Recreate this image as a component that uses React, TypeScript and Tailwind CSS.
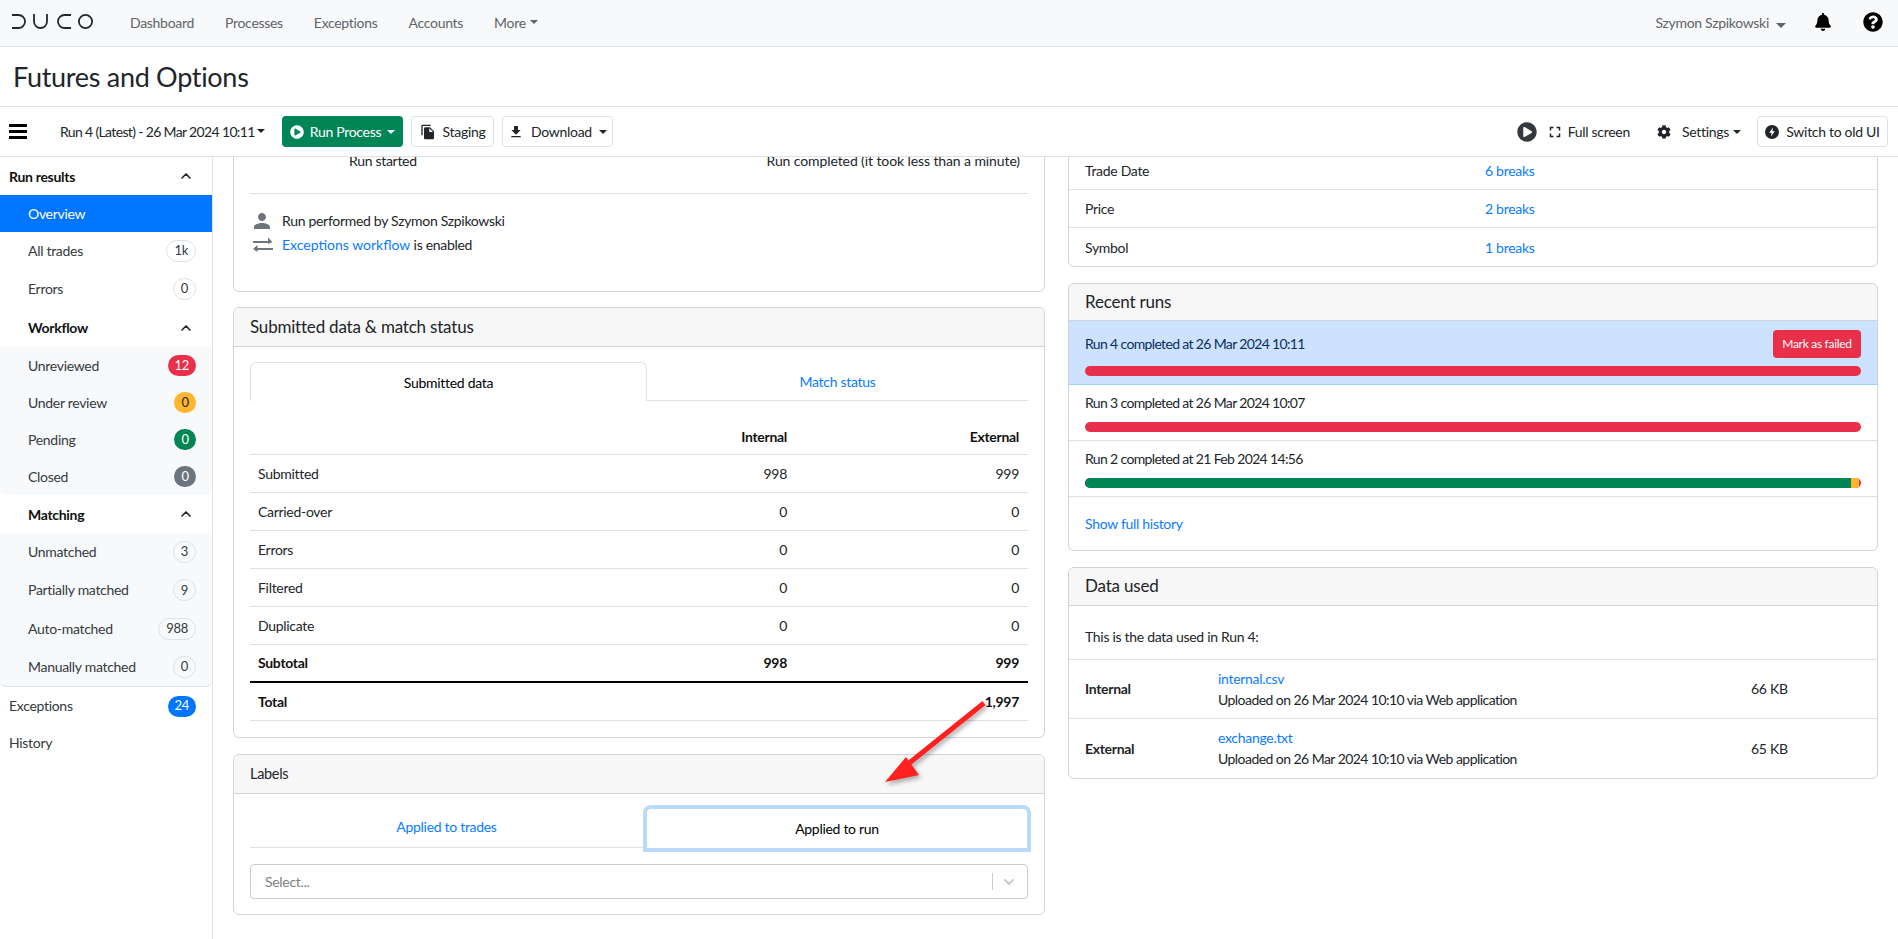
import { ChevronDown, ChevronUp } from 'lucide-react';
import { FaBell, FaCog, FaPlayCircle, FaQuestionCircle } from 'react-icons/fa';
import { MdFileCopy, MdFileDownload, MdFullscreen, MdPerson } from 'react-icons/md';

const Caret = ({ className = 'border-x-[4.5px] border-t-[4.5px] border-t-current' }: { className?: string }) => (
  <span className={`inline-block w-0 h-0 border-x-transparent ${className}`} />
);

const Logo = () => (
  <svg width="82" height="16" viewBox="0 0 82 16" fill="none" stroke="#24292e" strokeWidth="1.8">
    <path d="M0 1h6.5a6.2 6.2 0 0 1 0 13H0" />
    <path d="M22 0v7.5a6.5 6.5 0 0 0 13 0V0" />
    <path d="M59 1h-6.5a6.2 6.2 0 0 0 0 13H59" />
    <circle cx="73.5" cy="7.5" r="6.6" />
  </svg>
);

const SwapIcon = () => (
  <svg width="20" height="16" viewBox="0 0 20 16" className="ml-[3px] mr-[9px] shrink-0" fill="#6c757d">
    <path d="M0 5h15V1.500L19.500 6 15 8V7H0z" />
    <path d="M20 12H4.500V9L0 13l4.500 3v-2H20z" />
  </svg>
);

const Badge = ({ value, color }: { value: string; color?: string }) => (
  <span
    className={`inline-flex items-center justify-center rounded-full px-[7px] text-[13px] min-w-[22px] ${
      color ? `h-[21px] ${color}` : 'border border-[#dee2e6] h-[22px] text-[#343a40]'
    }`}
  >
    {value}
  </span>
);

const SideRow = ({ label, badge, h = 'h-[38px]' }: { label: string; badge?: React.ReactNode; h?: string }) => (
  <div className={`${h} flex items-center justify-between pl-[28px] pr-[16px] text-[#343a40]`}>
    <span className="pb-[1px]">{label}</span>
    {badge}
  </div>
);

const SideHead = ({ label, className }: { label: string; className: string }) => (
  <div className={`${className} flex items-center justify-between pr-[18px] font-bold text-[#111]`}>
    <span>{label}</span>
    <ChevronUp size={16} strokeWidth={2.5} className="text-[#212529]" />
  </div>
);

const Sidebar = () => (
  <aside className="w-[213px] shrink-0 border-r border-[#dee2e6] bg-white">
    <SideHead label="Run results" className="h-[38px] pl-[9px]" />
    <div className="h-[37px] flex items-center pl-[28px] pb-[1px] bg-[#0075ff] text-white">Overview</div>
    <SideRow label="All trades" badge={<Badge value="1k" />} />
    <SideRow label="Errors" badge={<Badge value="0" />} />
    <SideHead label="Workflow" className="h-[39px] pl-[28px]" />
    <div className="bg-[#f8f9fa] rounded-b-md">
      <SideRow h="h-[37px]" label="Unreviewed" badge={<Badge value="12" color="bg-[#e8304a] text-white" />} />
      <SideRow h="h-[37px]" label="Under review" badge={<Badge value="0" color="bg-[#ffb52e] text-[#212529]" />} />
      <SideRow h="h-[37px]" label="Pending" badge={<Badge value="0" color="bg-[#008556] text-white" />} />
      <SideRow h="h-[37px]" label="Closed" badge={<Badge value="0" color="bg-[#6c757d] text-white" />} />
    </div>
    <SideHead label="Matching" className="h-[38px] pl-[28px]" />
    <div className="bg-[#f8f9fa] rounded-b-md border-b border-[#dee2e6]">
      <SideRow h="h-[38.25px]" label="Unmatched" badge={<Badge value="3" />} />
      <SideRow h="h-[38.25px]" label="Partially matched" badge={<Badge value="9" />} />
      <SideRow h="h-[38.25px]" label="Auto-matched" badge={<Badge value="988" />} />
      <SideRow h="h-[38.25px]" label="Manually matched" badge={<Badge value="0" />} />
    </div>
    <div className="h-[38px] flex items-center justify-between pl-[9px] pr-[16px] text-[#343a40]">
      <span className="pb-[1px]">Exceptions</span>
      <Badge value="24" color="bg-[#0075ff] text-white" />
    </div>
    <div className="h-[36px] flex items-center pl-[9px] pb-[1px] text-[#343a40]">History</div>
  </aside>
);

const Card = ({ children, className = '' }: { children: React.ReactNode; className?: string }) => (
  <section className={`border border-[#ced4da] rounded-md bg-white ${className}`}>{children}</section>
);

const CardHead = ({ title, className = 'text-[17px] tracking-[-0.2px]', h = 'h-[39px]' }: { title: string; className?: string; h?: string }) => (
  <div className={`${h} flex items-center pl-[16px] pb-[1px] bg-[#f7f7f7] border-b border-[#ced4da] rounded-t-md text-[#212529] ${className}`}>
    {title}
  </div>
);

const rows = [
  ['Submitted', '998', '999'],
  ['Carried-over', '0', '0'],
  ['Errors', '0', '0'],
  ['Filtered', '0', '0'],
  ['Duplicate', '0', '0'],
];

const SubmittedCard = () => (
  <Card>
    <CardHead title="Submitted data & match status" />
    <div className="px-[16px] pt-[15px] pb-[16px]">
      <div className="flex h-[39px]">
        <div className="w-[397px] flex items-center justify-center border border-b-0 border-[#dee2e6] rounded-t-md text-black">
          Submitted data
        </div>
        <div className="flex-1 flex items-center justify-center border-b border-[#dee2e6] text-[#0a7cff]">Match status</div>
      </div>
      <div className="h-[54px] flex items-end pb-[7px] font-bold border-b border-[#dee2e6] text-[#111]">
        <span className="flex-1" />
        <span className="w-[100px] pr-[9px] text-right">Internal</span>
        <span className="w-[232px] pr-[9px] text-right">External</span>
      </div>
      {rows.map(([label, a, b]) => (
        <div key={label} className="h-[38px] flex items-center pb-[1px] border-b border-[#dee2e6] text-[#212529]">
          <span className="flex-1 pl-[8px]">{label}</span>
          <span className="w-[100px] pr-[9px] text-right">{a}</span>
          <span className="w-[232px] pr-[9px] text-right">{b}</span>
        </div>
      ))}
      <div className="h-[38px] flex items-center pb-[1px] border-b-2 border-black font-bold text-[#111]">
        <span className="flex-1 pl-[8px]">Subtotal</span>
        <span className="w-[100px] pr-[9px] text-right">998</span>
        <span className="w-[232px] pr-[9px] text-right">999</span>
      </div>
      <div className="h-[38px] flex items-center pb-[1px] border-b border-[#dee2e6] font-bold text-[#111]">
        <span className="flex-1 pl-[8px]">Total</span>
        <span className="pr-[9px] text-right">1,997</span>
      </div>
    </div>
  </Card>
);

const LabelsCard = () => (
  <Card className="mt-[1px]">
    <CardHead title="Labels" className="text-[14.5px]" />
    <div className="px-[16px] pt-[11px] pb-[15px]">
      <div className="flex items-start h-[47px]">
        <div className="w-[393px] shrink-0 h-[43px] flex items-center justify-center border-b border-[#dee2e6] text-[#0a7cff]">Applied to trades</div>
        <div className="w-[388px] shrink-0 h-[47px] flex items-center justify-center border-4 border-[#b9dafa] rounded-t-lg bg-white text-black">
          Applied to run
        </div>
      </div>
      <div className="mt-[12px] h-[35px] flex items-center border border-[#cccccc] rounded pl-[14px] pr-[10px] text-[#808080]">
        <span className="flex-1">Select...</span>
        <span className="h-[17px] border-l border-[#cccccc] mr-[8px]" />
        <ChevronDown size={16} strokeWidth={3} className="text-[#cccccc]" />
      </div>
    </div>
  </Card>
);

const RunBar = ({ children }: { children: React.ReactNode }) => (
  <div className="h-[10px] rounded-full overflow-hidden flex bg-[#e8304a]">{children}</div>
);

const RecentRuns = () => (
  <Card>
    <CardHead title="Recent runs" h="h-[37px]" />
    <div className="h-[64px] bg-[#cce2ff] border-b border-[#9fcdff] px-[16px] text-[#0b2e59]">
      <div className="h-[45px] flex items-center justify-between">
        <span className="tracking-[-0.65px]">Run 4 completed at 26 Mar 2024 10:11</span>
        <span className="h-[28px] w-[88px] flex items-center justify-center rounded bg-[#e8304a] text-white text-[12px]">Mark as failed</span>
      </div>
      <RunBar><span /></RunBar>
    </div>
    <div className="h-[56px] border-b border-[#dee2e6] px-[16px] pt-[7px] text-[#212529]">
      <div className="h-[30px] leading-[22px] tracking-[-0.65px]">Run 3 completed at 26 Mar 2024 10:07</div>
      <RunBar><span /></RunBar>
    </div>
    <div className="h-[56px] border-b border-[#dee2e6] px-[16px] pt-[7px] text-[#212529]">
      <div className="h-[30px] leading-[22px] tracking-[-0.65px]">Run 2 completed at 21 Feb 2024 14:56</div>
      <RunBar>
        <span className="flex-1 bg-[#008556]" />
        <span className="w-[8px] bg-[#ffb52e]" />
        <span className="w-[2px]" />
      </RunBar>
    </div>
    <div className="h-[53px] flex items-center pl-[16px] pb-[1px] text-[#0a7cff]">Show full history</div>
  </Card>
);

const DataUsed = () => (
  <Card>
    <CardHead title="Data used" h="h-[38px]" />
    <div className="h-[54px] flex items-center pl-[16px] border-b border-[#dee2e6] text-[#212529] pt-[8px]">This is the data used in Run 4:</div>
    {[
      ['Internal', 'internal.csv', '66 KB'],
      ['External', 'exchange.txt', '65 KB'],
    ].map(([label, file, size], i) => (
      <div key={label} className={`h-[59px] flex items-center pb-[1px] text-[#212529] ${i === 0 ? 'border-b border-[#dee2e6]' : ''}`}>
        <span className="w-[149px] pl-[16px] font-bold">{label}</span>
        <div className="w-[533px] leading-[21px]">
          <div className="text-[#0a7cff]">{file}</div>
          <div className="tracking-[-0.55px]">Uploaded on 26 Mar 2024 10:10 via Web application</div>
        </div>
        <span>{size}</span>
      </div>
    ))}
  </Card>
);

const Breaks = () => (
  <Card>
    {[
      ['Trade Date', '6 breaks'],
      ['Price', '2 breaks'],
      ['Symbol', '1 breaks'],
    ].map(([label, value], i) => (
      <div key={label} className={`h-[38px] flex items-center text-[#212529] ${i < 2 ? 'border-b border-[#dee2e6]' : ''}`}>
        <span className="w-[416px] pl-[16px]">{label}</span>
        <span className="text-[#0a7cff]">{value}</span>
      </div>
    ))}
  </Card>
);

export default function App() {
  return (
    <div className="relative h-screen flex flex-col overflow-hidden bg-white font-['Lato','Liberation_Sans',sans-serif] text-[14px] tracking-[-0.3px]">
      {/* Top nav */}
      <header className="h-[47px] shrink-0 flex items-center bg-[#f8f9fa] border-b border-[#dee2e6] pl-[12px] pb-[2px] text-[#5f6368]">
        <Logo />
        <nav className="flex items-center ml-[36px] gap-[31px]">
          <span>Dashboard</span>
          <span>Processes</span>
          <span>Exceptions</span>
          <span>Accounts</span>
          <span className="flex items-center gap-[4px]">More <Caret /></span>
        </nav>
        <div className="ml-auto flex items-center pr-[15px]">
          <span>Szymon Szpikowski</span>
          <span className="ml-[7px]"><Caret className="border-x-[5px] border-t-[5px] border-t-[#5f6368]" /></span>
          <FaBell size={18} className="ml-[28px] text-black" />
          <FaQuestionCircle size={20} className="ml-[31px] text-black" />
        </div>
      </header>

      <div className="h-[60px] shrink-0 flex items-center pl-[13px] pt-[2px] border-b border-[#dee2e6] text-[27px] text-[#212529]">
        Futures and Options
      </div>

      {/* Toolbar */}
      <div className="h-[50px] shrink-0 flex items-center border-b border-[#dee2e6] pl-[9px] pr-[10px] text-[#212529]">
        <div className="flex flex-col gap-[3.5px] w-[18px]">
          <span className="h-[2.5px] bg-black" />
          <span className="h-[2.5px] bg-black" />
          <span className="h-[2.5px] bg-black" />
        </div>
        <span className="ml-[33px] w-[205px] flex items-center justify-between pb-[1px] whitespace-nowrap tracking-[-0.65px]">Run 4 (Latest) - 26 Mar 2024 10:11 <Caret /></span>
        <button className="ml-[17px] h-[31px] w-[121px] flex items-center justify-center gap-[6px] rounded bg-[#008556] text-white">
          <FaPlayCircle size={14} /> Run Process <Caret />
        </button>
        <button className="ml-[8px] h-[31px] w-[83px] flex items-center justify-center gap-[7px] rounded border border-[#dee2e6]">
          <MdFileCopy size={16} /> Staging
        </button>
        <button className="ml-[8px] h-[31px] w-[111px] flex items-center justify-center gap-[7px] rounded border border-[#dee2e6]">
          <MdFileDownload size={16} /> Download <Caret />
        </button>
        <div className="ml-auto flex items-center">
          <FaPlayCircle size={20} className="text-[#343a40]" />
          <MdFullscreen size={18} className="ml-[9px]" />
          <span className="ml-[4px]">Full screen</span>
          <FaCog size={14} className="ml-[27px]" />
          <span className="ml-[11px] flex items-center gap-[4px]">Settings <Caret /></span>
          <button className="ml-[16px] h-[31px] w-[131px] flex items-center justify-center gap-[7px] rounded border border-[#dee2e6]">
            <svg width="14" height="14" viewBox="0 0 14 14">
              <circle cx="7" cy="7" r="7" fill="#212529" />
              <path d="M8 2.500 4.200 7.800h2.400L6 11.500l3.800-5.300H7.400z" fill="#fff" />
            </svg>
            Switch to old UI
          </button>
        </div>
      </div>

      <div className="flex-1 flex min-h-0">
        <Sidebar />
        <main className="flex-1 min-w-0 flex items-start gap-[23px] pl-[20px] overflow-hidden">
          <div className="w-[812px] shrink-0 flex flex-col gap-[15px] -mt-[27px]">
            <Card>
              <div className="px-[16px] pt-[19px] pb-[35px] text-[#212529]">
                <div className="flex justify-between pl-[99px] pr-[8px] h-[21px] items-center">
                  <span>Run started</span>
                  <span className="tracking-[-0.1px]">Run completed (it took less than a minute)</span>
                </div>
                <div className="mt-[22px] border-t border-[#dee2e6]" />
                <div className="mt-[15px] flex items-center h-[23.5px]">
                  <MdPerson size={24} className="mr-[8px] shrink-0 text-[#6c757d]" />
                  Run performed by Szymon Szpikowski
                </div>
                <div className="flex items-center h-[23.5px]">
                  <SwapIcon />
                  <span className="text-[#0a7cff] tracking-normal">Exceptions workflow</span>&nbsp;is enabled
                </div>
              </div>
            </Card>
            <SubmittedCard />
            <LabelsCard />
          </div>
          <div className="w-[810px] shrink-0 flex flex-col gap-[16px] -mt-[6px]">
            <Breaks />
            <RecentRuns />
            <DataUsed />
          </div>
        </main>
      </div>

      {/* Red annotation arrow */}
      <svg className="absolute left-[870px] top-[690px] drop-shadow-[2px_3px_2px_rgba(0,0,0,0.3)]" width="130" height="105" viewBox="0 0 130 105">
        <path d="M114 13 38 74" stroke="#ff2020" strokeWidth="5" />
        <path d="M15 92 36 67 49 85z" fill="#ff2020" />
      </svg>
    </div>
  );
}
